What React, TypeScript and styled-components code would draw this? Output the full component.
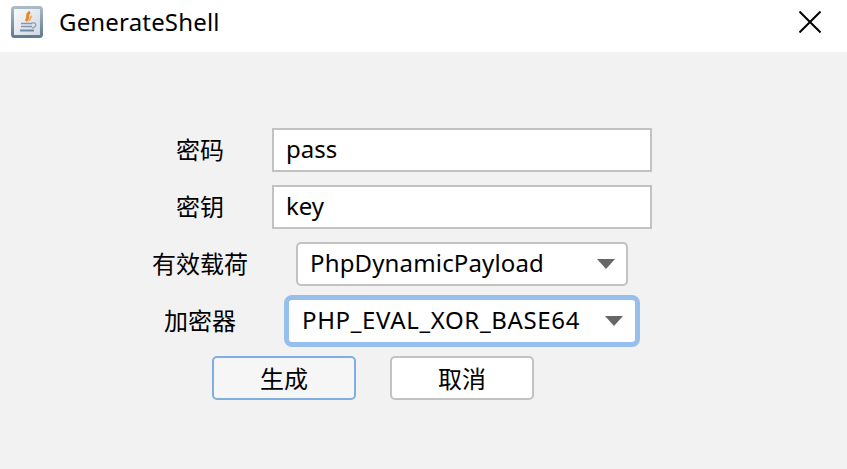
import React from 'react';
import styled, { createGlobalStyle } from 'styled-components';

const GlobalStyle = createGlobalStyle`
  html, body {
    margin: 0;
    padding: 0;
    background: #f2f2f2;
  }
  body {
    font-family: "Noto Sans", "Noto Sans CJK SC", sans-serif;
    color: #000;
  }
`;

const Window = styled.div`
  width: 847px;
  height: 469px;
  display: flex;
  flex-direction: column;
  overflow: hidden;
`;

const TitleBar = styled.header`
  height: 52px;
  box-sizing: border-box;
  flex: none;
  background: #fff;
  display: flex;
  align-items: center;
  padding: 0 26px 8px 11px;
`;

const Title = styled.h1`
  margin: 0 0 0 16px;
  flex: 1;
  font-size: 24px;
  font-weight: 400;
  line-height: 44px;
  letter-spacing: 0.17px;
`;

const Form = styled.main`
  display: flex;
  flex-direction: column;
  padding-top: 76px;
`;

const Row = styled.div<{ $indent: number; $top: number }>`
  display: flex;
  align-items: center;
  margin-left: ${(p) => p.$indent}px;
  margin-top: ${(p) => p.$top}px;
`;

const Label = styled.label`
  font-size: 24px;
  line-height: 32px;
  margin: 0 48px 2px 0;
  font-family: "Noto Sans CJK SC", sans-serif;
`;

const TextInput = styled.input`
  box-sizing: border-box;
  width: 380px;
  height: 44px;
  padding: 0 12px 3px;
  border: 2px solid #c2c2c2;
  border-radius: 0;
  background: #fff;
  font: 24px "Noto Sans", sans-serif;
  color: #000;
  outline: none;
`;

const Combo = styled.div<{ $width: number; $focused?: boolean; $tracking?: number }>`
  box-sizing: border-box;
  width: ${(p) => p.$width}px;
  height: ${(p) => (p.$focused ? 52 : 44)}px;
  display: flex;
  align-items: center;
  justify-content: space-between;
  padding: 0 ${(p) => (p.$focused ? 12 : 11)}px 0 ${(p) => (p.$focused ? 13 : 12)}px;
  background: #fff;
  background-clip: padding-box;
  border: ${(p) => (p.$focused ? '5px solid #96bfee' : '2px solid #c2c2c2')};
  border-radius: ${(p) => (p.$focused ? 8 : 5)}px;
  font-size: 24px;
  letter-spacing: ${(p) => p.$tracking ?? 0}px;
`;

const ComboText = styled.span`
  margin-bottom: 3px;
`;

const Arrow = styled.svg`
  flex: none;
  width: 18px;
  height: 10px;
  fill: #666;
`;

const ButtonRow = styled.div`
  display: flex;
  gap: 34px;
  margin: 9px 0 0 212px;
`;

const Button = styled.button<{ $primary?: boolean }>`
  box-sizing: border-box;
  width: 144px;
  height: 44px;
  padding: 0 0 2px;
  border: 2px solid ${(p) => (p.$primary ? '#80aee0' : '#c2c2c2')};
  border-radius: 5px;
  background: ${(p) => (p.$primary ? '#f6f6f6' : '#fff')};
  color: #000;
  font: 24px "Noto Sans CJK SC", sans-serif;
`;

const CloseIcon = () => (
  <svg width="22" height="22" viewBox="0 0 22 22" fill="none" stroke="#000" strokeWidth="2">
    <path d="M0.5 0.5L21.5 21.5M21.5 0.5L0.5 21.5" />
  </svg>
);

const JavaIcon = () => (
  <svg width="32" height="32" viewBox="0 0 32 32">
    <defs>
      <linearGradient id="tile" x1="0" y1="0" x2="1" y2="1">
        <stop offset="0" stopColor="#fafbfc" />
        <stop offset="1" stopColor="#cfd6de" />
      </linearGradient>
      <linearGradient id="edge" x1="0" y1="0" x2="0" y2="1">
        <stop offset="0" stopColor="#a9bac8" />
        <stop offset="1" stopColor="#5f7c94" />
      </linearGradient>
    </defs>
    <rect x="1.5" y="1.5" width="29" height="29" rx="2" fill="url(#tile)" stroke="url(#edge)" strokeWidth="3" />
    <path d="M19 6C14 9 19 11 15 15" fill="none" stroke="#e8862a" strokeWidth="3" />
    <path d="M21 10C18 12 20 13 18 15" fill="none" stroke="#f0a860" strokeWidth="1.6" />
    <path d="M10 17.5H21M10 20.5H21" stroke="#7f98ae" strokeWidth="1.6" />
    <path d="M21 17C26 16 26 21 21 22" fill="none" stroke="#8ea4b8" strokeWidth="1.4" />
    <path d="M9 24.5H23" stroke="#6d8aa6" strokeWidth="2" />
  </svg>
);

const Caret = () => (
  <Arrow viewBox="0 0 18 10">
    <path d="M0 0H18L9 10Z" />
  </Arrow>
);

const App: React.FC = () => {
  return (
    <Window>
      <GlobalStyle />
      <TitleBar>
        <JavaIcon />
        <Title>GenerateShell</Title>
        <CloseIcon />
      </TitleBar>
      <Form>
        <Row $indent={176} $top={0}>
          <Label>密码</Label>
          <TextInput defaultValue="pass" />
        </Row>
        <Row $indent={176} $top={13}>
          <Label>密钥</Label>
          <TextInput defaultValue="key" />
        </Row>
        <Row $indent={152} $top={13}>
          <Label>有效载荷</Label>
          <Combo $width={332} $tracking={0.15}>
            <ComboText>PhpDynamicPayload</ComboText>
            <Caret />
          </Combo>
        </Row>
        <Row $indent={164} $top={9}>
          <Label>加密器</Label>
          <Combo $width={356} $focused $tracking={0.65}>
            <ComboText>PHP_EVAL_XOR_BASE64</ComboText>
            <Caret />
          </Combo>
        </Row>
        <ButtonRow>
          <Button $primary>生成</Button>
          <Button>取消</Button>
        </ButtonRow>
      </Form>
    </Window>
  );
};

export default App;
